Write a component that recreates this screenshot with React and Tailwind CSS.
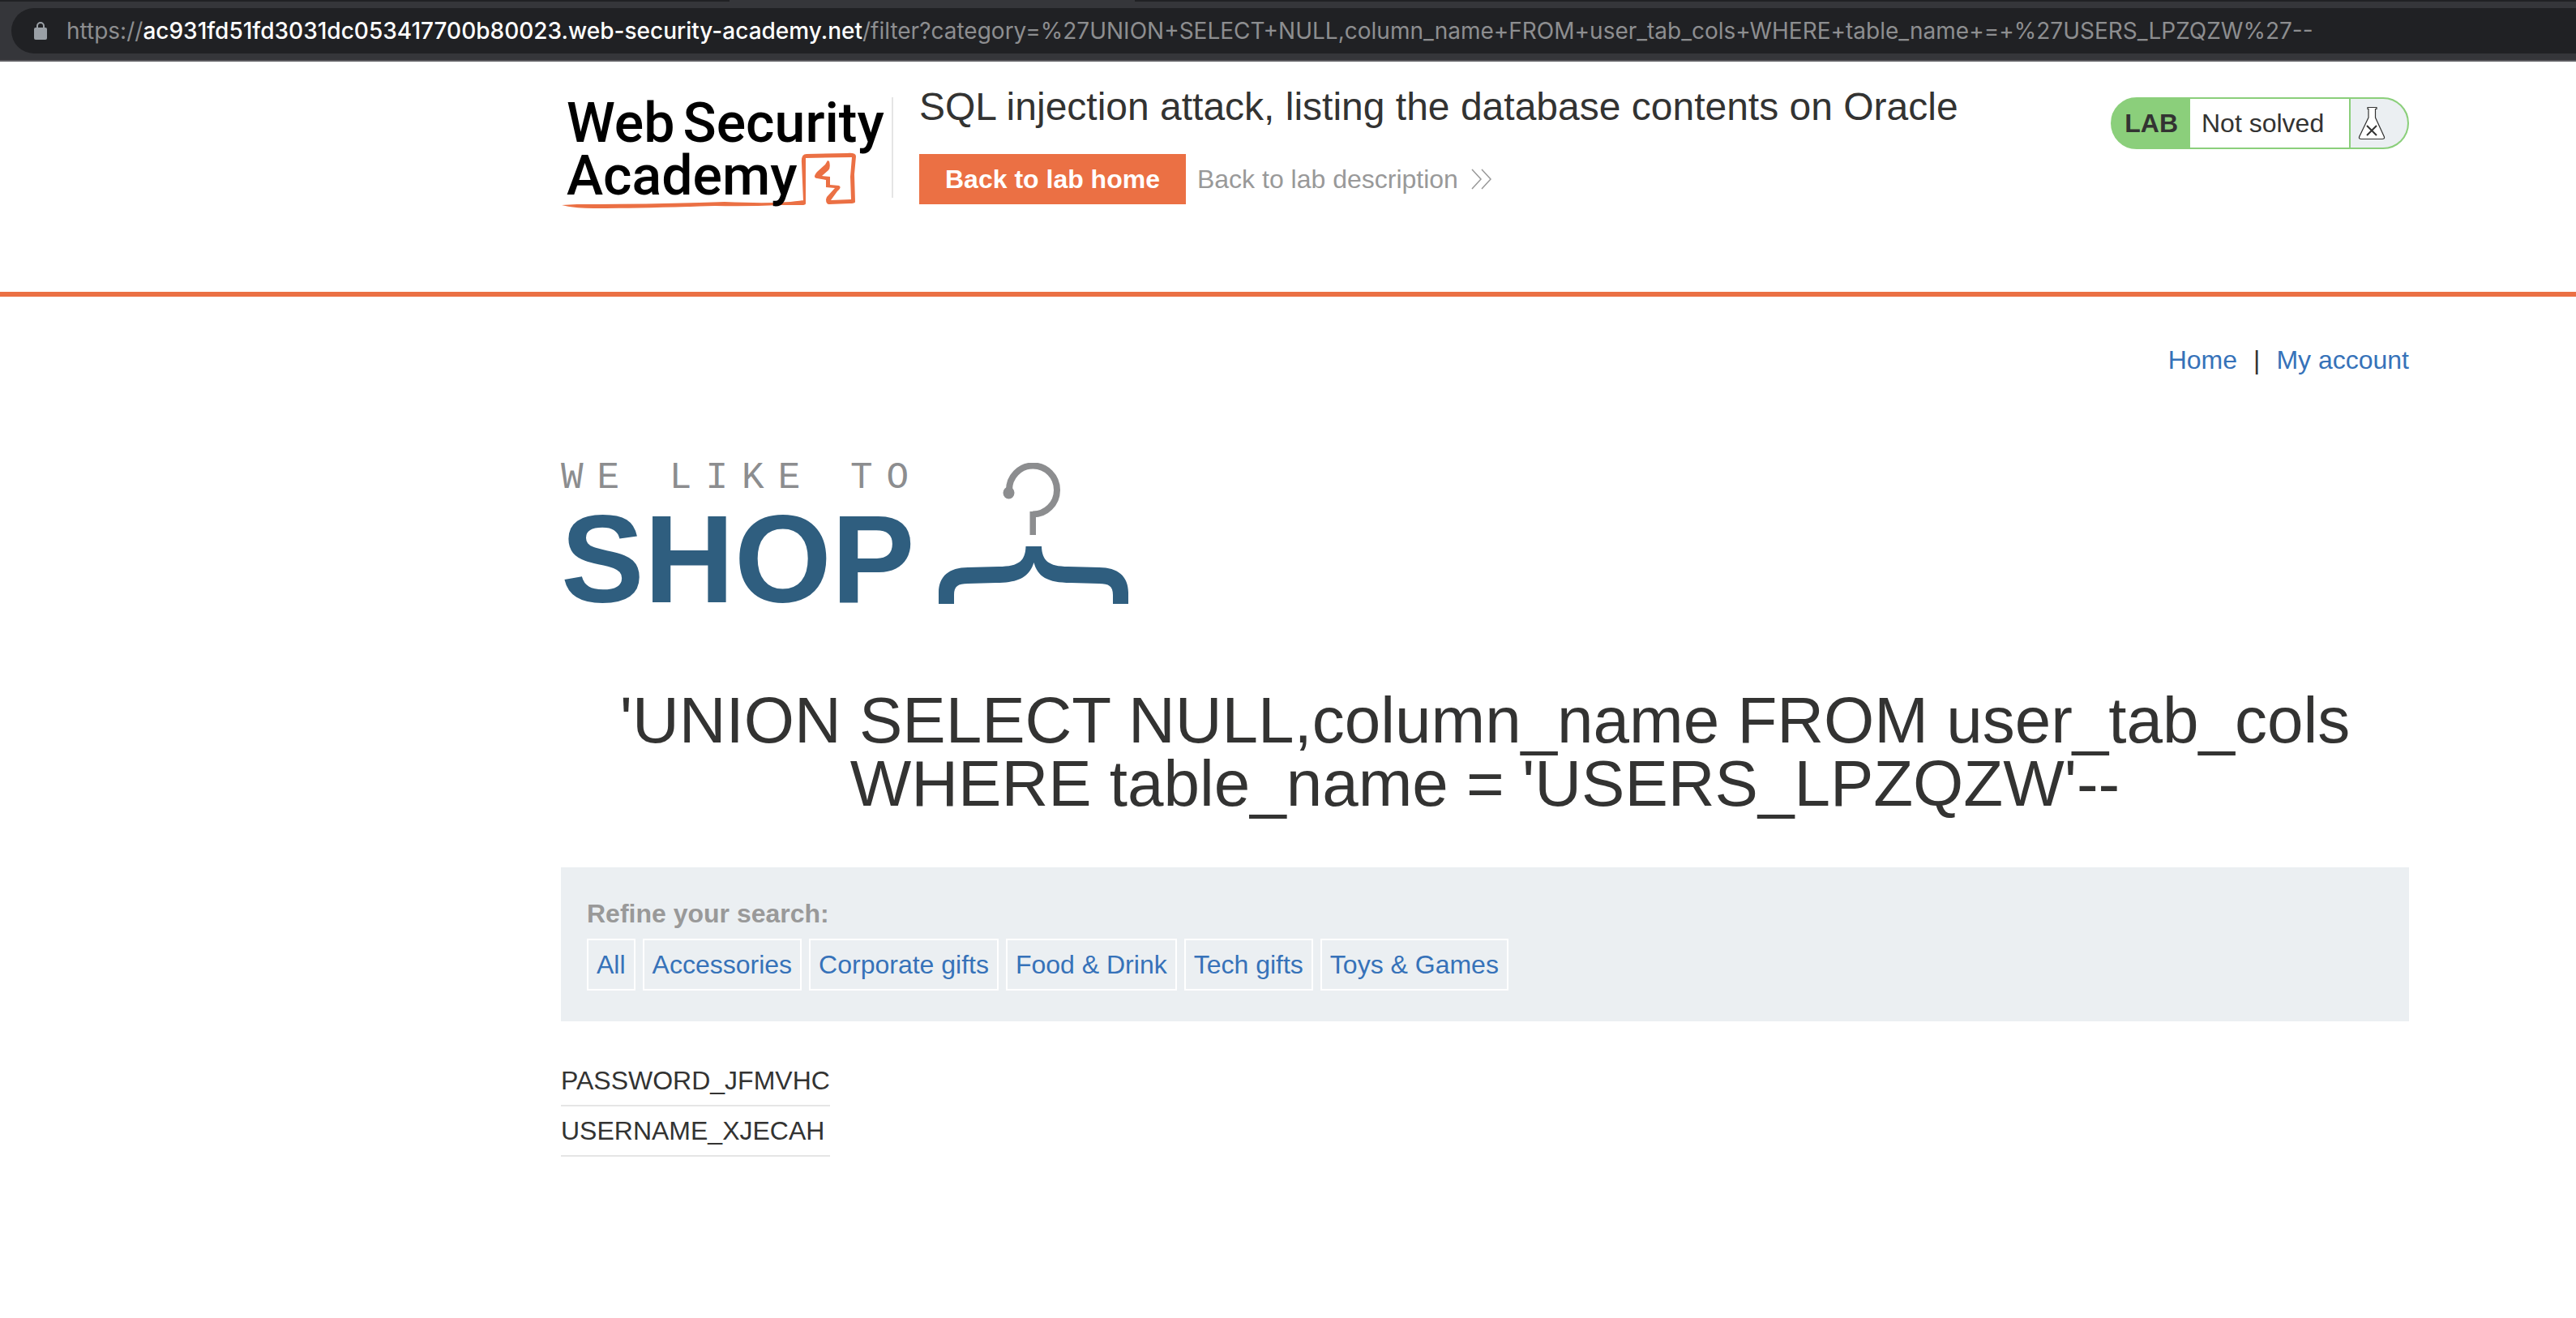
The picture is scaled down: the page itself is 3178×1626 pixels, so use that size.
const categories = ['All', 'Accessories', 'Corporate gifts', 'Food & Drink', 'Tech gifts', 'Toys & Games'];
const rows = ['PASSWORD_JFMVHC', 'USERNAME_XJECAH'];

function AddressBar() {
  return (
    <div className="border-b-2 border-[#5c5b60] bg-[#35363a]">
      <div className="flex h-[2px] bg-[#202124]">
        <div className="ml-[900px] w-[500px] bg-[#35363a]" />
      </div>
      <div className="mt-2 mb-2 ml-[14px] flex h-14 items-center rounded-l-full bg-[#202124] pl-7">
        <svg width="16" height="22" viewBox="0 0 16 22" aria-hidden="true">
          <path d="M4 8V5a4 4 0 0 1 8 0v3" fill="none" stroke="#9aa0a6" strokeWidth="2" />
          <rect y="7" width="16" height="15" rx="2" fill="#9aa0a6" />
        </svg>
        <div className="ml-6 font-['Inter',sans-serif] text-[28px] leading-9 whitespace-nowrap text-[#8d8e90]">
          https://<span className="font-medium text-white">ac931fd51fd3031dc053417700b80023.web-security-academy.net</span>
          /filter?category=%27UNION+SELECT+NULL,column_name+FROM+user_tab_cols+WHERE+table_name+=+%27USERS_LPZQZW%27--
        </div>
      </div>
    </div>
  );
}

function AcademyLogo() {
  return (
    <a href="#academy" aria-label="Web Security Academy" className="relative block h-[144px] w-[408px] shrink-0">
      <svg className="absolute inset-0" width="408" height="144" viewBox="0 0 408 144" fill="#eb7044" aria-hidden="true">
        <path d="M1 133 L20 132 Q120 132 202 129 Q270 132 299 127 V128 L297 81 Q296 70 303 70 L353 69 Q364 68 364 73 L362 95 L363 129 Q363 131 356 131 L331 132 Q327 132 327 126 L328 123 L338 112 L327 111 L327 102 L316 100 Q310 99 316 92 L326 83 L329 78 L331 79 Q333 87 330 90 L322 97 L332 98 L332 108 L343 109 Q347 111 341 116 L333 127 L358 126 L357 98 L359 74 L302 75 L302 131 Q302 133 297 133 L270 133 Q230 135 190 134 Q100 137 40 137 Q16 137 1 133Z" />
      </svg>
      <span className="relative block pl-[7px] font-['Roboto',sans-serif] text-[68px] leading-[65px] font-medium text-black">
        <span className="flex gap-[10px]"><span>Web</span><span>Security</span></span>
        <span className="block">Academy</span>
      </span>
    </a>
  );
}

function LabStatus() {
  return (
    <div className="mt-11 flex h-16 overflow-hidden rounded-full border-2 border-[#8bcf7b] bg-[#8bcf7b]">
      <span className="flex items-center px-[15px] font-bold">LAB</span>
      <span className="flex w-[196px] items-center bg-white pl-[14px]">Not solved</span>
      <span className="ml-[2px] flex w-[70px] items-center bg-[#ebeff2] pl-[9px]">
        <svg width="34" height="42" viewBox="0 0 34 42" aria-hidden="true">
          <path d="M12 1.500H23V3.500H21.500V14L32.500 38Q33 40.500 30 40.500H4Q1 40.500 1.500 38L13 14V3.500H12Z" fill="#fff" stroke="#333332" strokeWidth="1.200" />
          <path d="M11 24L23 36M23 24L11 36" stroke="#333332" strokeWidth="2" />
        </svg>
      </span>
    </div>
  );
}

function ShopLogo() {
  return (
    <div className="flex items-start">
      <div className="w-[466px]">
        <div className="font-['Liberation_Mono',monospace] text-[46px] leading-[64px] tracking-[0.37em] whitespace-nowrap text-[#8c8d8f]">WE LIKE TO</div>
        <div className="text-[154px] leading-[136px] font-bold text-[#2f5e7f]">SHOP</div>
      </div>
      <svg className="mt-[13px]" width="234" height="174" viewBox="0 0 234 174" aria-hidden="true">
        <path d="M87 34A29.500 30 0 1 1 116 63.500" fill="none" stroke="#8c8d8f" strokeWidth="8" />
        <ellipse cx="86.500" cy="37" rx="7" ry="7.500" fill="#8c8d8f" />
        <path d="M112.500 60h7.500v29h-7.500z" fill="#8c8d8f" />
        <path d="M0 174V160C0 140 13 129 36 129L74 128C100 128 107 120 107.500 103H127C127.500 120 135 128 160 128L198 129C221 129 234 140 234 160V174H215V163C215 152 210 149 198 149L163 148C134 148 122 140 117.500 123C112 140 100 148 71 148L36 149C24 149 19 152 19 163V174Z" fill="#2f5e7f" />
      </svg>
    </div>
  );
}

export default function App() {
  return (
    <div className="min-h-screen bg-white font-['Liberation_Sans',Arial,sans-serif] text-[32px] leading-[38px] text-[#333332]">
      <AddressBar />
      <header className="border-b-[6px] border-[#eb7044]">
        <div className="mr-[206px] ml-[692px] flex h-[284px] items-start">
          <div className="flex pt-[44px]">
            <AcademyLogo />
            <div className="h-[124px] w-[2px] bg-[#e5e5e5]" />
          </div>
          <section className="ml-8 flex-1 pt-7">
            <h2 className="text-[48px] leading-[56px]">SQL injection attack, listing the database contents on Oracle</h2>
            <div className="mt-[30px] flex items-center">
              <a href="#home" className="flex h-[62px] items-center bg-[#eb7044] px-8 font-bold text-white">Back to lab home</a>
              <a href="#description" className="ml-[14px] flex items-center gap-4 text-[#999]">
                Back to lab description
                <svg width="26" height="26" viewBox="0 0 26 26" fill="none" stroke="#999" strokeWidth="1.500" aria-hidden="true">
                  <path d="M1 1L12 13L1 25M13 1L24 13L13 25" />
                </svg>
              </a>
            </div>
          </section>
          <LabStatus />
        </div>
      </header>
      <main className="mr-[206px] ml-[692px]">
        <nav className="flex justify-end gap-[20px] pt-[59px]">
          <a href="#home" className="text-[#3672b9]">Home</a>
          <span>|</span>
          <a href="#account" className="text-[#3672b9]">My account</a>
        </nav>
        <div className="mt-[95px]"><ShopLogo /></div>
        <h1 className="mt-[92px] text-center text-[80px] leading-[78px]">'UNION SELECT NULL,column_name FROM user_tab_cols WHERE table_name = 'USERS_LPZQZW'--</h1>
        <section className="mt-[64px] bg-[#ebeff2] px-8 pt-[38px] pb-[38px]">
          <h3 className="font-bold text-[#999]">Refine your search:</h3>
          <div className="mt-3 flex gap-[9px]">
            {categories.map((c) => (
              <a key={c} href="#filter" className="flex h-16 items-center border-2 border-white px-[10px] text-[#3672b9]">{c}</a>
            ))}
          </div>
        </section>
        <table className="mt-[42px]">
          <tbody>
            {rows.map((r) => (
              <tr key={r} className="border-b-2 border-[#e5e5e5]">
                <td className="h-[62px]">{r}</td>
              </tr>
            ))}
          </tbody>
        </table>
      </main>
    </div>
  );
}
